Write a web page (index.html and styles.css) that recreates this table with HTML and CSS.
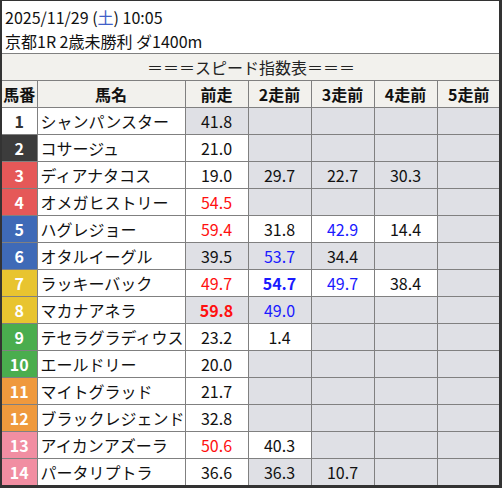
FILE: index.html
```html
<!DOCTYPE html>
<html lang="ja">
<head>
<meta charset="utf-8">
<title>スピード指数表</title>
<link rel="stylesheet" href="styles.css">
</head>
<body>
<div class="frame">
  <div class="info">
    <div class="line">2025/11/29 (<span class="sat">土</span>) 10:05</div>
    <div class="line">京都1R 2歳未勝利 ダ1400m</div>
  </div>
  <table class="speed">
    <colgroup>
      <col class="c-no"><col class="c-name"><col class="c-run"><col class="c-run"><col class="c-run"><col class="c-run"><col class="c-run">
    </colgroup>
    <thead>
      <tr class="title"><th colspan="7">＝＝＝スピード指数表＝＝＝</th></tr>
      <tr class="head"><th>馬番</th><th>馬名</th><th>前走</th><th>2走前</th><th>3走前</th><th>4走前</th><th>5走前</th></tr>
    </thead>
    <tbody>
      <tr><td class="no w1">1</td><td class="name">シャンパンスター</td><td class="g">41.8</td><td class="g"></td><td class="g"></td><td class="g"></td><td class="g"></td></tr>
      <tr><td class="no w2">2</td><td class="name">コサージュ</td><td>21.0</td><td class="g"></td><td class="g"></td><td class="g"></td><td class="g"></td></tr>
      <tr><td class="no w3">3</td><td class="name">ディアナタコス</td><td>19.0</td><td class="g">29.7</td><td class="g">22.7</td><td class="g">30.3</td><td class="g"></td></tr>
      <tr><td class="no w3">4</td><td class="name">オメガヒストリー</td><td class="red">54.5</td><td class="g"></td><td class="g"></td><td class="g"></td><td class="g"></td></tr>
      <tr><td class="no w4">5</td><td class="name">ハグレジョー</td><td class="red">59.4</td><td>31.8</td><td class="blue">42.9</td><td>14.4</td><td class="g"></td></tr>
      <tr><td class="no w4">6</td><td class="name">オタルイーグル</td><td class="g">39.5</td><td class="g blue">53.7</td><td class="g">34.4</td><td class="g"></td><td class="g"></td></tr>
      <tr><td class="no w5">7</td><td class="name">ラッキーバック</td><td class="red">49.7</td><td class="blue best">54.7</td><td class="blue">49.7</td><td>38.4</td><td class="g"></td></tr>
      <tr><td class="no w5">8</td><td class="name">マカナアネラ</td><td class="g red best">59.8</td><td class="g blue">49.0</td><td class="g"></td><td class="g"></td><td class="g"></td></tr>
      <tr><td class="no w6">9</td><td class="name">テセラグラディウス</td><td>23.2</td><td>1.4</td><td class="g"></td><td class="g"></td><td class="g"></td></tr>
      <tr><td class="no w6">10</td><td class="name">エールドリー</td><td>20.0</td><td class="g"></td><td class="g"></td><td class="g"></td><td class="g"></td></tr>
      <tr><td class="no w7">11</td><td class="name">マイトグラッド</td><td>21.7</td><td class="g"></td><td class="g"></td><td class="g"></td><td class="g"></td></tr>
      <tr><td class="no w7">12</td><td class="name">ブラックレジェンド</td><td>32.8</td><td class="g"></td><td class="g"></td><td class="g"></td><td class="g"></td></tr>
      <tr><td class="no w8">13</td><td class="name">アイカンアズーラ</td><td class="red">50.6</td><td>40.3</td><td class="g"></td><td class="g"></td><td class="g"></td></tr>
      <tr><td class="no w8">14</td><td class="name">パータリプトラ</td><td>36.6</td><td class="g">36.3</td><td class="g">10.7</td><td class="g"></td><td class="g"></td></tr>
    </tbody>
  </table>
</div>
</body>
</html>
```

FILE: styles.css
```css
html, body {
  margin: 0;
  padding: 0;
  background: #ffffff;
}

.frame {
  box-sizing: border-box;
  width: 502px;
  height: 488px;
  border-style: solid;
  border-color: #333333;
  border-width: 1px 3px 3px 2px;
  background: #ffffff;
  font-family: "Noto Sans CJK JP", "Noto Sans", sans-serif;
  color: #111111;
  overflow: hidden;
}

.info {
  padding: 4px 0 0 3px;
  font-size: 16px;
  line-height: 24px;
  height: 48px;
}

.sat {
  color: #4060c8;
}

.speed {
  width: 497px;
  border-collapse: collapse;
  table-layout: fixed;
  font-size: 16px;
}

.c-no { width: 35px; }
.c-name { width: 148px; }
.c-run { width: 63px; }

.speed th,
.speed td {
  border: 1px solid #808080;
  height: 26px;
  padding: 0;
  line-height: 20px;
  text-align: center;
  white-space: nowrap;
  overflow: hidden;
}

.speed tr > :first-child { border-left: none; }
.speed tr > :last-child { border-right: none; }

.title th {
  background: #f2f1ed;
  font-weight: normal;
  color: #222222;
}

.head th {
  background: #f2f1ed;
  font-weight: bold;
  color: #111111;
}

.speed td { background: #ffffff; }
.speed td.g { background: #dfe0e5; }

.speed td.name {
  text-align: left;
  padding-left: 3px;
}

.speed td.no {
  font-weight: bold;
  color: #ffffff;
}

.w1 { background: #ffffff !important; color: #333333 !important; }
.w2 { background: #3c3c3c !important; }
.w3 { background: #e55858 !important; }
.w4 { background: #3f6ab7 !important; }
.w5 { background: #e8c430 !important; }
.w6 { background: #4aad4e !important; }
.w7 { background: #ef993d !important; }
.w8 { background: #f18ea2 !important; }

.red { color: #ff1010; }
.blue { color: #1a1aff; }
.best { font-weight: bold; }
```
